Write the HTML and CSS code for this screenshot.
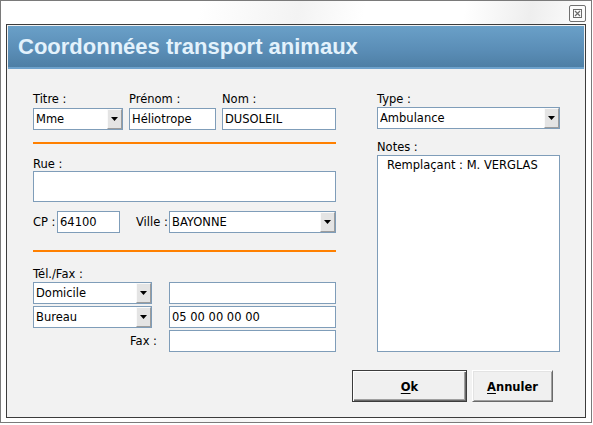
FILE: index.html
```html
<!DOCTYPE html>
<html lang="fr">
<head>
<meta charset="utf-8">
<title>Coordonnées transport animaux</title>
<link rel="stylesheet" href="styles.css">
</head>
<body>
<div class="window">
  <div class="titlestrip">
    <div class="close">
      <svg width="9" height="9" viewBox="0 0 9 9"><rect x="0.5" y="0.5" width="8" height="8" fill="none" stroke="#6b6b6b"/><path d="M2 2L7 7M7 2L2 7" stroke="#6b6b6b" stroke-width="1.2"/></svg>
    </div>
  </div>
  <div class="panel">
    <div class="header">Coordonnées transport animaux</div>
    <div class="body">
      <div class="cols">
        <div class="left">
          <div class="row1">
            <div class="field w-titre">
              <div class="lbl">Titre :</div>
              <div class="box combo"><span class="val">Mme</span><span class="drop"><i class="arrow"></i></span></div>
            </div>
            <div class="field w-prenom">
              <div class="lbl">Prénom :</div>
              <div class="box">Héliotrope</div>
            </div>
            <div class="field w-nom">
              <div class="lbl">Nom :</div>
              <div class="box">DUSOLEIL</div>
            </div>
          </div>
          <div class="sep sep1"></div>
          <div class="lbl lbl-rue">Rue :</div>
          <div class="box rue"></div>
          <div class="cprow">
            <span class="inl lbl-cp">CP :</span>
            <div class="box w-cp">64100</div>
            <span class="inl lbl-ville">Ville :</span>
            <div class="box combo w-ville"><span class="val">BAYONNE</span><span class="drop"><i class="arrow"></i></span></div>
          </div>
          <div class="sep sep2"></div>
          <div class="lbl lbl-tel">Tél./Fax :</div>
          <div class="phones">
            <div class="box combo w-kind"><span class="val">Domicile</span><span class="drop"><i class="arrow"></i></span></div>
            <div class="box"></div>
            <div class="box combo w-kind"><span class="val">Bureau</span><span class="drop"><i class="arrow"></i></span></div>
            <div class="box">05 00 00 00 00</div>
            <div class="faxlbl">Fax :</div>
            <div class="box"></div>
          </div>
        </div>
        <div class="right">
          <div class="lbl lbl-type">Type :</div>
          <div class="box combo"><span class="val">Ambulance</span><span class="drop"><i class="arrow"></i></span></div>
          <div class="lbl lbl-notes">Notes :</div>
          <div class="box notes">Remplaçant : M. VERGLAS</div>
        </div>
      </div>
      <div class="buttons">
        <div class="btn btn-ok"><u>O</u>k</div>
        <div class="btn btn-cancel"><u>A</u>nnuler</div>
      </div>
    </div>
  </div>
</div>
</body>
</html>
```
FILE: styles.css
```css
html, body {
  margin: 0;
  padding: 0;
}
body {
  background: #ffffff;
  font-family: "DejaVu Sans", sans-serif;
  font-size: 11.5px;
  color: #000;
}
.window {
  width: 592px;
  height: 423px;
  box-sizing: border-box;
  border: 1px solid #7a7a7a;
  background: linear-gradient(100deg, #ffffff 0%, #ffffff 30%, #f3f3f3 45%, #ffffff 55%, #ffffff 70%, #eeeeee 80%, #ffffff 90%);
  display: flex;
  flex-direction: column;
}
.titlestrip {
  height: 23px;
  flex: none;
  display: flex;
  justify-content: flex-end;
  padding-right: 5px;
}
.close {
  width: 17px;
  height: 17px;
  box-sizing: border-box;
  margin-top: 4px;
  border: 1px solid #707070;
  border-radius: 2px;
  background: #fbfbfb;
  display: flex;
  align-items: center;
  justify-content: center;
}
.close svg {
  display: block;
}
.panel {
  margin: 0 5px 4px 5px;
  height: 394px;
  box-sizing: border-box;
  border: 1px solid #3c3c3c;
  padding: 1px;
  background: #f2f2f2;
  display: flex;
  flex-direction: column;
}
.header {
  height: 41px;
  flex: none;
  border-bottom: 2px solid #6ea2cc;
  background: linear-gradient(#6aa0c8, #5a8db6 60%, #4e7fa5);
  color: #e3f2fc;
  font-family: "Liberation Sans", Arial, sans-serif;
  font-weight: bold;
  font-size: 22px;
  line-height: 41px;
  padding-left: 10px;
  white-space: nowrap;
}
.body {
  padding: 23px 0 0 25px;
}
.cols {
  display: flex;
  gap: 41px;
}
.left {
  width: 303px;
  flex: none;
}
.right {
  width: 183px;
  flex: none;
}
.lbl {
  line-height: 14px;
  height: 14px;
  white-space: nowrap;
}
.row1 {
  display: flex;
  gap: 6px;
}
.row1 .lbl {
  margin-bottom: 2px;
}
.w-titre { width: 90px; }
.w-prenom { width: 87px; }
.w-nom { width: 114px; }
.box {
  box-sizing: border-box;
  height: 22px;
  border: 1px solid #7f9db9;
  background: #ffffff;
  line-height: 20px;
  padding-left: 2px;
  white-space: nowrap;
  overflow: hidden;
}
.combo {
  display: flex;
  padding-right: 0;
}
.combo .val {
  flex: 1;
  overflow: hidden;
}
.drop {
  width: 15px;
  flex: none;
  box-sizing: border-box;
  border-top: 1px solid #fafafa;
  border-left: 1px solid #fafafa;
  border-right: 1px solid #9c9c9c;
  border-bottom: 1px solid #9c9c9c;
  background: #e4e4e4;
  display: flex;
  align-items: center;
  justify-content: center;
}
.arrow {
  display: block;
  width: 7px;
  height: 4px;
  background: #000;
  clip-path: polygon(0 0, 100% 0, 50% 100%);
}
.sep {
  height: 2px;
  background: #ff8000;
}
.sep1 {
  margin-top: 12px;
}
.lbl-rue {
  margin-top: 13px;
}
.rue {
  height: 31px;
}
.cprow {
  margin-top: 9px;
  display: flex;
  align-items: center;
}
.inl {
  white-space: nowrap;
  line-height: 14px;
}
.lbl-cp {
  width: 24px;
  flex: none;
}
.w-cp {
  width: 63px;
  flex: none;
}
.lbl-ville {
  margin-left: 16px;
  width: 33px;
  flex: none;
}
.w-ville {
  width: 167px;
  flex: none;
}
.sep2 {
  margin-top: 17px;
}
.lbl-tel {
  margin-top: 15px;
  margin-bottom: 1px;
}
.phones {
  display: grid;
  grid-template-columns: 136px 167px;
  row-gap: 2px;
}
.w-kind {
  width: 119px;
}
.faxlbl {
  text-align: right;
  padding-right: 12px;
  line-height: 22px;
}
.lbl-type {
  margin-bottom: 1px;
}
.lbl-notes {
  margin-top: 11px;
  margin-bottom: 1px;
}
.notes {
  height: 197px;
  line-height: 14px;
  padding: 2px 4px 0 9px;
}
.buttons {
  margin-top: 18px;
  margin-right: 31px;
  display: flex;
  justify-content: flex-end;
  gap: 5px;
}
.btn {
  box-sizing: border-box;
  height: 32px;
  background: #f0f0f0;
  font-weight: bold;
  display: flex;
  align-items: center;
  justify-content: center;
  padding-top: 1px;
}
.btn u {
  text-decoration-thickness: 1px;
  text-underline-offset: 2px;
}
.btn-ok {
  width: 115px;
  border: 1px solid #3c3c3c;
  box-shadow: inset 1px 1px #ffffff, inset -1px -1px #696969, inset -2px -2px #a0a0a0;
}
.btn-cancel {
  width: 81px;
  border: 1px solid;
  border-color: #ffffff #696969 #696969 #ffffff;
  box-shadow: inset 1px 1px #e3e3e3, inset -1px -1px #a0a0a0;
}
```
